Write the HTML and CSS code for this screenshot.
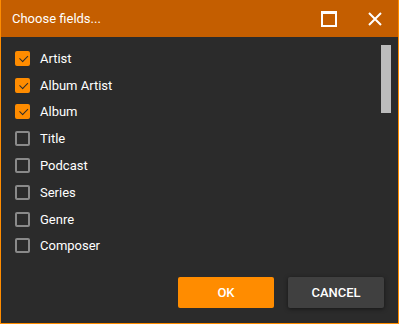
FILE: index.html
```html
<!DOCTYPE html>
<html lang="en">
  <head>
    <meta charset="UTF-8" />
    <title>Choose fields</title>
    <link rel="stylesheet" href="styles.css">
  </head>
  <body>
    <div class="dialog">
      <header class="titlebar">
        <span class="title">Choose fields...</span>
        <span class="win-btn">
          <svg width="16" height="16" viewBox="0 0 16 16">
            <rect x="1" y="1" width="14" height="14" fill="none" stroke="#fff" stroke-width="2"/>
            <rect x="1" y="1" width="14" height="2" fill="#fff"/>
          </svg>
        </span>
        <span class="win-btn">
          <svg width="16" height="16" viewBox="0 0 16 16">
            <path d="M2 2L14 14M14 2L2 14" stroke="#fff" stroke-width="2"/>
          </svg>
        </span>
      </header>
      <div class="content">
        <ul class="fields">
          <li class="checked"><span class="box"></span>Artist</li>
          <li class="checked"><span class="box"></span>Album Artist</li>
          <li class="checked"><span class="box"></span>Album</li>
          <li><span class="box"></span>Title</li>
          <li><span class="box"></span>Podcast</li>
          <li><span class="box"></span>Series</li>
          <li><span class="box"></span>Genre</li>
          <li><span class="box"></span>Composer</li>
        </ul>
        <div class="scrollbar"><div class="thumb"></div></div>
      </div>
      <div class="buttons">
        <button class="ok">OK</button>
        <button class="cancel">CANCEL</button>
      </div>
    </div>
  </body>
</html>
```
FILE: styles.css
```css
body,
html {
  margin: 0;
  height: 100%;
  font-family: Roboto, "Liberation Sans", sans-serif;
  background-color: #2b2b2b;
}

.dialog {
  box-sizing: border-box;
  width: 399px;
  height: 324px;
  border: 1px solid #ff8c00;
  border-top: none;
  background-color: #2b2b2b;
  display: flex;
  flex-direction: column;
}

.titlebar {
  height: 37px;
  background-color: #c45e00;
  display: flex;
  align-items: center;
  padding: 0 0 0 11px;
  flex-shrink: 0;
}

.title {
  flex: 1;
  color: #fff;
  font-size: 13px;
}

.win-btn {
  width: 46px;
  display: flex;
  justify-content: center;
}

.content {
  flex: 1;
  display: flex;
  padding: 8px 7px 0 14px;
}

.fields {
  flex: 1;
  list-style: none;
  margin: 0;
  padding: 0;
}

.fields li {
  height: 26.8px;
  display: flex;
  align-items: center;
  color: #fff;
  font-size: 13px;
}

.box {
  box-sizing: border-box;
  width: 15px;
  height: 15px;
  border: 2px solid #8a8a8a;
  border-radius: 2px;
  margin-right: 10px;
  position: relative;
}

.checked .box {
  background-color: #ff8c00;
  border-color: #ff8c00;
}

.checked .box::after {
  content: "";
  position: absolute;
  left: 2px;
  top: 0px;
  width: 7px;
  height: 4px;
  border-left: 1.5px solid #2b2b2b;
  border-bottom: 1.5px solid #2b2b2b;
  transform: rotate(-45deg) translate(-1px, 2px);
}

.scrollbar {
  width: 10px;
}

.thumb {
  height: 68px;
  background-color: #bcbcbc;
}

.buttons {
  display: flex;
  justify-content: flex-end;
  gap: 14px;
  padding: 0 14px 15px 0;
}

.buttons button {
  width: 96px;
  height: 31px;
  border: none;
  border-radius: 2px;
  font-family: Roboto, "Liberation Sans", sans-serif;
  font-size: 13px;
  font-weight: 500;
  color: #fff;
  cursor: pointer;
}

.ok {
  background-color: #ff8c00;
}

.cancel {
  background-color: #404040;
  box-shadow: 0 1px 4px rgba(0, 0, 0, 0.5);
}
```
